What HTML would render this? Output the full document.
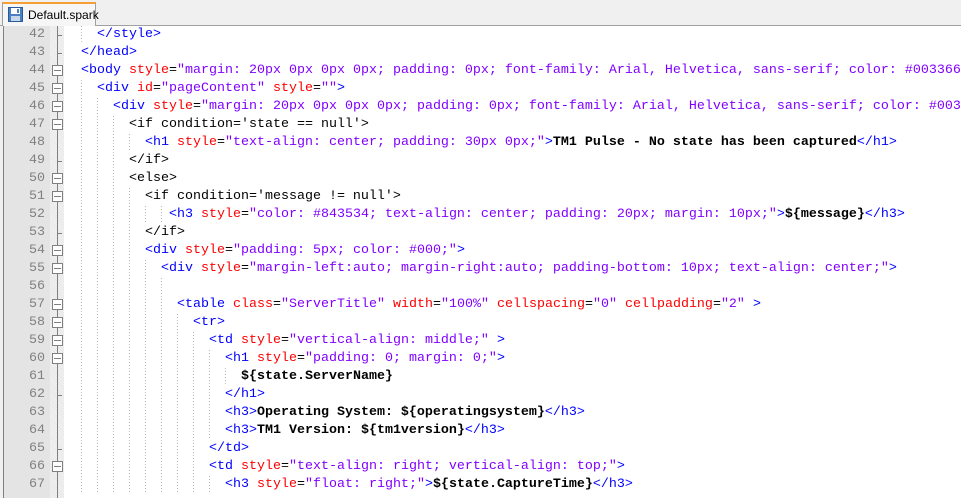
<!DOCTYPE html>
<html><head><meta charset="utf-8"><style>
body{margin:0;width:961px;height:498px;overflow:hidden;background:#f0f0f0;position:relative;font-family:"Liberation Mono",monospace;}
.tabbar{position:absolute;left:0;top:0;width:961px;height:25px;background:#f0f0f0;border-bottom:1px solid #a0a0a0;}
.tab{position:absolute;left:2px;top:2px;width:94px;height:24px;background:#f6f6f6;border:1px solid #a0a0a0;border-bottom:none;border-top:2px solid #f6a033;box-sizing:border-box;font:12px "Liberation Sans",sans-serif;}
.tab span{position:absolute;left:25px;top:4px;color:#000}
.ed{position:absolute;left:3px;top:26px;width:958px;height:472px;background:#fff;border-left:1px solid #808080;}
.num{position:absolute;left:4px;top:26px;width:46px;height:472px;background:#e4e4e4;}
.fold{position:absolute;left:50px;top:26px;width:14px;height:472px;background-color:#f4f4f4;background-image:repeating-linear-gradient(45deg,#e6e6e6 0 1px,transparent 1px 2px);}
.vl{position:absolute;left:57px;top:26px;width:1px;height:472px;background:#808080}
.ln{position:absolute;left:4px;width:41px;height:18px;line-height:18px;text-align:right;font-size:13.33px;color:#808080}
.box{position:absolute;left:52px;width:11px;height:11px;border:1px solid #808080;background:#fff;box-sizing:border-box}
.box:after{content:"";position:absolute;left:1px;top:4px;width:7px;height:1px;background:#808080}
.tick{position:absolute;left:57px;width:5px;height:1px;background:#808080}
.l{position:absolute;left:65px;height:18px;line-height:18px;font-size:13.33px;white-space:pre;color:#000}
.g{position:absolute;left:81px;height:18px}
.t{color:#0000ff}.a{color:#ff0000}.v{color:#8000ff}.b{font-weight:bold}
</style></head><body>
<div class="tabbar"></div>
<div class="tab"><svg style="position:absolute;left:5px;top:3px" width="15" height="15" viewBox="0 0 15 15"><rect x="0.5" y="0.5" width="14" height="14" fill="#4a7fc1" stroke="#2a5a9a"/><rect x="3" y="1" width="9" height="6" fill="#fff"/><rect x="3" y="9" width="9" height="5" fill="#c8d8ec"/><rect x="9" y="2" width="2" height="4" fill="#4a7fc1"/></svg><span>Default.spark</span></div>
<div class="ed"></div>
<div class="num"></div>
<div class="fold"></div>
<div class="vl"></div>
<div id="c"></div>
<script>
var L=[
[4,'<span class="t">&lt;/style&gt;</span>','e'],
[2,'<span class="t">&lt;/head&gt;</span>','e'],
[2,'<span class="t">&lt;body </span><span class="a">style</span>=<span class="v">"margin: 20px 0px 0px 0px; padding: 0px; font-family: Arial, Helvetica, sans-serif; color: #003366</span>','b'],
[4,'<span class="t">&lt;div </span><span class="a">id</span>=<span class="v">"pageContent"</span> <span class="a">style</span>=<span class="v">""</span><span class="t">&gt;</span>','b'],
[6,'<span class="t">&lt;div </span><span class="a">style</span>=<span class="v">"margin: 20px 0px 0px 0px; padding: 0px; font-family: Arial, Helvetica, sans-serif; color: #003</span>','b'],
[8,'&lt;if condition=\'state == null\'&gt;','b'],
[10,'<span class="t">&lt;h1 </span><span class="a">style</span>=<span class="v">"text-align: center; padding: 30px 0px;"</span><span class="t">&gt;</span><span class="b">TM1 Pulse - No state has been captured</span><span class="t">&lt;/h1&gt;</span>',''],
[8,'&lt;/if&gt;','e'],
[8,'&lt;else&gt;','b'],
[10,'&lt;if condition=\'message != null\'&gt;','b'],
[13,'<span class="t">&lt;h3 </span><span class="a">style</span>=<span class="v">"color: #843534; text-align: center; padding: 20px; margin: 10px;"</span><span class="t">&gt;</span><span class="b">${message}</span><span class="t">&lt;/h3&gt;</span>',''],
[10,'&lt;/if&gt;','e'],
[10,'<span class="t">&lt;div </span><span class="a">style</span>=<span class="v">"padding: 5px; color: #000;"</span><span class="t">&gt;</span>','b'],
[12,'<span class="t">&lt;div </span><span class="a">style</span>=<span class="v">"margin-left:auto; margin-right:auto; padding-bottom: 10px; text-align: center;"</span><span class="t">&gt;</span>','b'],
[14,'',''],
[14,'<span class="t">&lt;table </span><span class="a">class</span>=<span class="v">"ServerTitle"</span> <span class="a">width</span>=<span class="v">"100%"</span> <span class="a">cellspacing</span>=<span class="v">"0"</span> <span class="a">cellpadding</span>=<span class="v">"2"</span> <span class="t">&gt;</span>','b'],
[16,'<span class="t">&lt;tr&gt;</span>','b'],
[18,'<span class="t">&lt;td </span><span class="a">style</span>=<span class="v">"vertical-align: middle;"</span> <span class="t">&gt;</span>','b'],
[20,'<span class="t">&lt;h1 </span><span class="a">style</span>=<span class="v">"padding: 0; margin: 0;"</span><span class="t">&gt;</span>','b'],
[22,'<span class="b">${state.ServerName}</span>',''],
[20,'<span class="t">&lt;/h1&gt;</span>','e'],
[20,'<span class="t">&lt;h3&gt;</span><span class="b">Operating System: ${operatingsystem}</span><span class="t">&lt;/h3&gt;</span>',''],
[20,'<span class="t">&lt;h3&gt;</span><span class="b">TM1 Version: ${tm1version}</span><span class="t">&lt;/h3&gt;</span>',''],
[18,'<span class="t">&lt;/td&gt;</span>','e'],
[18,'<span class="t">&lt;td </span><span class="a">style</span>=<span class="v">"text-align: right; vertical-align: top;"</span><span class="t">&gt;</span>','b'],
[20,'<span class="t">&lt;h3 </span><span class="a">style</span>=<span class="v">"float: right;"</span><span class="t">&gt;</span><span class="b">${state.CaptureTime}</span><span class="t">&lt;/h3&gt;</span>','']
];
var h='';
for(var i=0;i<L.length;i++){var y=26+i*18,ind=L[i][0];
h+='<div class="ln" style="top:'+y+'px">'+(42+i)+'</div>';
if(L[i][2]=='b')h+='<div class="box" style="top:'+(y+3)+'px"></div>';
if(L[i][2]=='e')h+='<div class="tick" style="top:'+(y+9)+'px"></div>';
var gw=Math.floor((ind-1)/2)*16;if(i==0)gw=16;
if(gw>0)h+='<div class="g" style="top:'+y+'px;width:'+gw+'px;background-image:repeating-linear-gradient(180deg,#b8b8b8 0 1px,transparent 1px 3px);-webkit-mask:repeating-linear-gradient(90deg,#000 0 1px,transparent 1px 16px);mask:repeating-linear-gradient(90deg,#000 0 1px,transparent 1px 16px)"></div>';
var sp='';for(var k=0;k<ind;k++)sp+=' ';
h+='<div class="l" style="top:'+y+'px">'+sp+L[i][1]+'</div>';}
document.getElementById('c').innerHTML=h;
</script>
</body></html>
